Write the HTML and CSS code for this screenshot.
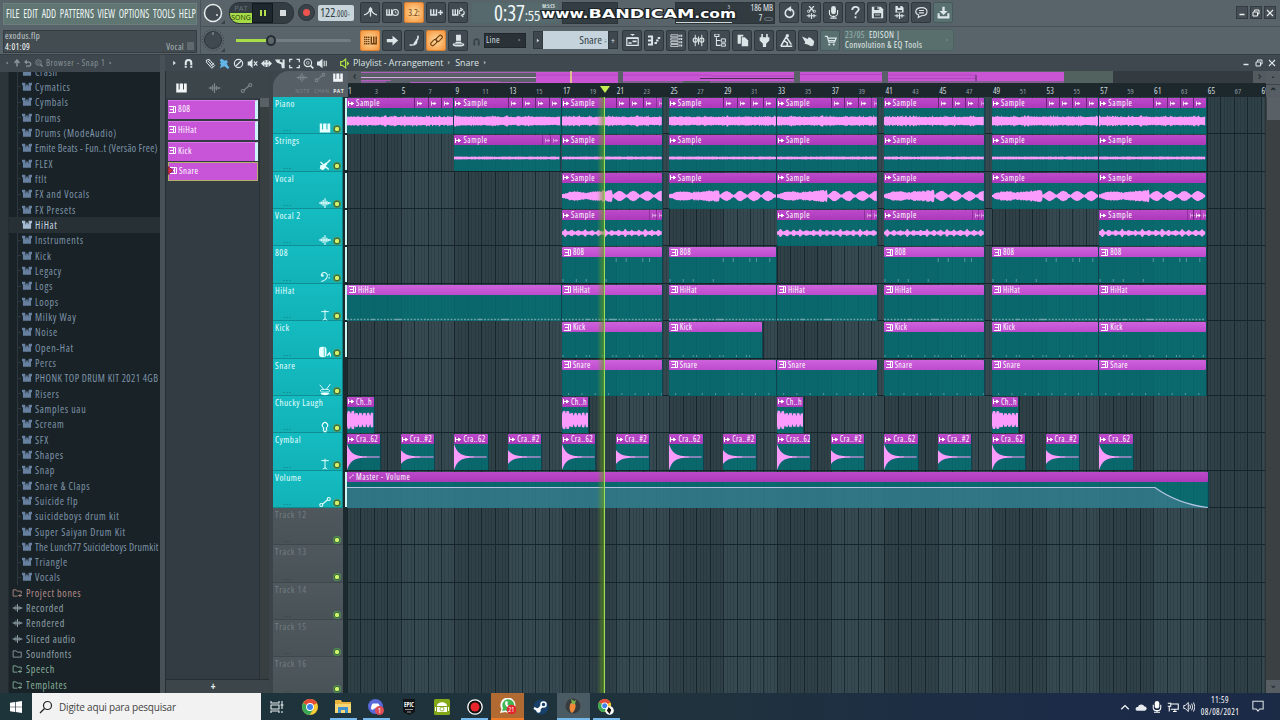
FILE: index.html
```html
<!DOCTYPE html>
<html lang="pt-BR">
<head>
    <meta charset="UTF-8">
    <title>exodus.flp</title>
    <link rel="stylesheet" href="styles.css">
</head>
<body>
    <svg class="defs" width="0" height="0">
        <symbol id="piano" viewBox="0 0 16 16"><path d="M1 2h3.200v8h1.300V2h4.500v8h1.300V2H15v12H1z" fill="currentColor"/></symbol>
        <symbol id="wave" viewBox="0 0 16 16"><path d="M0 8h16M3 6v4M5.500 4v8M8 1.500v13M10.500 5v6M13 6.500v3" stroke="currentColor" stroke-width="1.500" fill="none"/></symbol>
        <symbol id="auto" viewBox="0 0 16 16"><path d="M4.500 11L11.500 5" stroke="currentColor" stroke-width="1.500"/><circle cx="3" cy="12" r="2" fill="none" stroke="currentColor" stroke-width="1.500"/><circle cx="13" cy="4" r="2" fill="none" stroke="currentColor" stroke-width="1.500"/></symbol>
        <symbol id="magnet" viewBox="0 0 16 16"><path d="M4 14V7a4 4 0 0 1 8 0v7" fill="none" stroke="currentColor" stroke-width="3"/><path d="M2 11h4M10 11h4" stroke="#333c42"/></symbol>
        <symbol id="right" viewBox="0 0 16 16"><path d="M5 3l6 5-6 5z" fill="currentColor"/></symbol>
        <symbol id="up" viewBox="0 0 16 16"><path d="M8 15V3M3 8l5-6 5 6" fill="none" stroke="currentColor" stroke-width="3"/></symbol>
        <symbol id="back" viewBox="0 0 16 16"><path d="M4 14h5c6 0 6-8 0-8H4" fill="none" stroke="currentColor" stroke-width="2.500"/><path d="M0 6l6-5v10z" fill="currentColor"/></symbol>
        <symbol id="pencil" viewBox="0 0 16 16"><path d="M2 3l4-1 8 9-4 4-8-9zM4 6l3-3M7 9l3-3M8 12l5-5M5 5l7 8" fill="none" stroke="currentColor" stroke-width="1.400"/></symbol>
        <symbol id="brush" viewBox="0 0 16 16"><path d="M1 3l3-2 4 3 3-1 2 3-2 2 4 6-2 2-5-4-3 1-4 2 2-5-2-2 2-1z" fill="currentColor"/></symbol>
        <symbol id="ban" viewBox="0 0 16 16"><circle cx="8" cy="8" r="6" fill="none" stroke="currentColor" stroke-width="1.700"/><path d="M12 4l-8 8" stroke="currentColor" stroke-width="1.700"/></symbol>
        <symbol id="mute" viewBox="0 0 16 16"><path d="M1 5h3l4-4v14l-4-4H1z" fill="currentColor"/><path d="M10 5l5 6M15 5l-5 6" stroke="currentColor" stroke-width="1.700"/></symbol>
        <symbol id="slip" viewBox="0 0 16 16"><path d="M0 8l5-5v3.500h1.500V3h3v3.500H11V3l5 5-5 5V9.500H9.500V13h-3V9.500H5V13z" fill="currentColor"/></symbol>
        <symbol id="slice" viewBox="0 0 16 16"><path d="M0 2h14v13h-4L9 9 3 7z" fill="currentColor"/><path d="M7 2v3l4 2V2" fill="#3f484e"/></symbol>
        <symbol id="select" viewBox="0 0 16 16"><path d="M1 6V2h4M11 2h4v4M15 10v4h-4M5 14H1v-4" fill="none" stroke="currentColor" stroke-width="1.800"/></symbol>
        <symbol id="lens" viewBox="0 0 16 16"><circle cx="7" cy="7" r="5.500" fill="none" stroke="currentColor" stroke-width="1.600"/><circle cx="7" cy="7" r="2" fill="none" stroke="currentColor"/><path d="M11 11l4 4" stroke="currentColor" stroke-width="2.400"/></symbol>
        <symbol id="speaker" viewBox="0 0 16 16"><path d="M0 5h3l5-4v14l-5-4H0z" fill="currentColor"/><path d="M10.500 4v8M13.500 4v8" stroke="currentColor" stroke-width="1.500"/></symbol>
        <symbol id="play" viewBox="0 0 16 16"><path d="M1 5h3l5-4v14l-5-4H1z" fill="none" stroke="currentColor" stroke-width="2"/><path d="M11 4l4 4-4 4z" fill="currentColor"/></symbol>
        <symbol id="box" viewBox="0 0 16 16"><path d="M0 1h5l1 3h4l1-3h5v4h-1.500v9h-13V5H0z" fill="currentColor"/><path d="M6 3v4M10 3v4" stroke="#192227"/></symbol>
        <symbol id="folder" viewBox="0 0 16 16"><path d="M1 13V3h5l1.500 2H14v8z" fill="none" stroke="currentColor" stroke-width="1.400"/></symbol>
        <symbol id="folderplus" viewBox="0 0 16 16"><path d="M8 13H1V3h5l1.500 2H14v4M9 12h6M12 9.500v5" fill="none" stroke="currentColor" stroke-width="1.400"/></symbol>
        <symbol id="metro" viewBox="0 0 16 16"><path d="M0 11q5-1 7-6M16 11q-5-1-7-6M8 13V4" fill="none" stroke="currentColor" stroke-width="1.600"/><path d="M8 1l2.500 3L8 8 5.500 4z" fill="currentColor"/></symbol>
        <symbol id="wait" viewBox="0 0 16 16"><path d="M1 4v7h7M4 4v6M7 4v6" fill="none" stroke="currentColor" stroke-width="1.700"/><circle cx="11.500" cy="8" r="3.700" fill="none" stroke="currentColor" stroke-width="1.300"/><path d="M11.500 6v2.500H13" stroke="currentColor" fill="none"/></symbol>
        <symbol id="keysplus" viewBox="0 0 16 16"><path d="M1 4v7h7V4M4.500 4v6M10 8h6M13 5v6" fill="none" stroke="currentColor" stroke-width="1.800"/></symbol>
        <symbol id="keysloop" viewBox="0 0 16 16"><path d="M1 4v7h6V4M4 4v6" fill="none" stroke="currentColor" stroke-width="1.700"/><path d="M10 10a3.300 3.300 0 0 1 1-5.500M14 6a3.300 3.300 0 0 1-1 5.500M10 2.500l3 2-2.500 2M14.500 9.500l-3 2 2.500 2" fill="none" stroke="currentColor" stroke-width="1.300"/></symbol>
        <symbol id="typing" viewBox="0 0 16 16"><path d="M0 4h7.500M0 6.700h7.500M0 9.400h7.500M0 12h7.500" stroke="currentColor" stroke-width="1.700" stroke-dasharray="1.800 .6"/><path d="M9 3v9h6V3M12 3v9" fill="none" stroke="currentColor" stroke-width="1.800"/></symbol>
        <symbol id="arrow" viewBox="0 0 16 16"><path d="M1 6h7V2l7 6-7 6v-4H1z" fill="currentColor"/></symbol>
        <symbol id="step" viewBox="0 0 16 16"><path d="M2 13.500h4M10 8l2-2 .5-4" fill="none" stroke="currentColor" stroke-width="2"/><path d="M6 14l1-3 3-4 2 1-1 4-3 2z" fill="currentColor"/></symbol>
        <symbol id="link" viewBox="0 0 16 16"><rect x="0" y="8" width="9" height="4.500" rx="2.200" transform="rotate(-45 5 10)" fill="none" stroke="currentColor" stroke-width="1.400"/><rect x="7" y="3.500" width="9" height="4.500" rx="2.200" transform="rotate(-45 11 6)" fill="none" stroke="currentColor" stroke-width="1.400"/></symbol>
        <symbol id="hat" viewBox="0 0 16 16"><path d="M5 1h6v8l1 2 3 1v2q-7 3-14 0v-2l3-1 1-2z" fill="currentColor"/><path d="M4 9h8M3 12.500h10" stroke="#3e474d"/></symbol>
        <symbol id="undo" viewBox="0 0 16 16"><path d="M10 4a5.200 5.200 0 1 1-5 .5" fill="none" stroke="currentColor" stroke-width="2"/><path d="M4 4l6-4v7z" fill="currentColor"/></symbol>
        <symbol id="cut" viewBox="0 0 16 16"><path d="M5 0l6 7M11 0L5 7M2 12h12M5 10v4M8 9v7M11 10v4" stroke="currentColor" stroke-width="1.500"/><circle cx="11.500" cy="6.500" r="1.500" fill="none" stroke="currentColor"/><circle cx="4.500" cy="6.500" r="1.500" fill="none" stroke="currentColor"/></symbol>
        <symbol id="mic" viewBox="0 0 16 16"><rect x="5" y="0" width="6" height="10" rx="3" fill="currentColor"/><path d="M3 5v4a5 4 0 0 0 10 0V5M8 12v3M4 15h8" fill="none" stroke="currentColor" stroke-width="1.400"/></symbol>
        <symbol id="help" viewBox="0 0 16 16"><path d="M4 5c0-5 8-5 8-1 0 3-4 3-4 6.500M8 12.500V15" fill="none" stroke="currentColor" stroke-width="2.200"/></symbol>
        <symbol id="save" viewBox="0 0 16 16"><path d="M1 1h11l3 3v11H1z" fill="currentColor"/><path d="M4 1h6v4H4zM3.500 9h9v5h-9z" fill="#3e474d"/><path d="M5 11h6" stroke="currentColor"/><path d="M8 1h1.500v3H8z" fill="currentColor"/></symbol>
        <symbol id="savewave" viewBox="0 0 16 16"><path d="M3 0h8l2 2v6H3z" fill="currentColor"/><path d="M5 5h6v2H5zM6 0h3v2H6z" fill="#3e474d"/><path d="M2 12h12M5 10v4M8 9v7M11 10v4" stroke="currentColor" stroke-width="1.500"/></symbol>
        <symbol id="chat" viewBox="0 0 16 16"><path d="M8 2c9 0 9 10 0 10l-4 2 .5-3C-1 9 0 2 8 2zM5 5.500h6M5 8.500h6" fill="none" stroke="currentColor" stroke-width="1.400"/></symbol>
        <symbol id="down" viewBox="0 0 16 16"><path d="M6.500 1h3v5H13L8 11 3 6h3.500z" fill="currentColor"/><path d="M2 9v5h12V9" fill="none" stroke="currentColor" stroke-width="2.600"/></symbol>
        <symbol id="plwin" viewBox="0 0 16 16"><path d="M5 0h6L8 2.500z" fill="currentColor"/><path d="M1 5h14v9H1z" fill="none" stroke="currentColor" stroke-width="1.500"/><path d="M1 5h14M3 11h4M8 9h5" stroke="currentColor" stroke-width="2"/></symbol>
        <symbol id="roll" viewBox="0 0 16 16"><path d="M0 3h5v10H0M0 8h5M8 11h3M10 8h3M12 5h3" fill="none" stroke="currentColor" stroke-width="2.400"/></symbol>
        <symbol id="rack" viewBox="0 0 16 16"><path d="M1 1h9v2.500H1zM1 5h9v2.500H1zM1 9h9v2.500H1zM1 13h9v2.500H1z" fill="none" stroke="currentColor"/><path d="M11.500 2.200h3.500M11.500 6.200h3.500M11.500 10.200h3.500M11.500 14.200h3.500" stroke="currentColor" stroke-width="2.500" stroke-dasharray="1.500 .6"/></symbol>
        <symbol id="mixer" viewBox="0 0 16 16"><path d="M4 1v14M12 1v14M8 3v10" stroke="currentColor" stroke-width="1.200"/><rect x="1.500" y="5" width="5" height="5" rx="2" fill="none" stroke="currentColor" stroke-width="1.500"/><rect x="9.500" y="5" width="5" height="5" rx="2" fill="none" stroke="currentColor" stroke-width="1.500"/></symbol>
        <symbol id="tree" viewBox="0 0 16 16"><path d="M1 0h5v3H1zM3 4v10h5M3 8h5" fill="none" stroke="currentColor" stroke-width="1.300"/><path d="M9 6h5v4H9zM9 12h5v3H9z" fill="none" stroke="currentColor" stroke-width="1.200"/></symbol>
        <symbol id="pages" viewBox="0 0 16 16"><path d="M2 1h7v2H6v9H2z" fill="currentColor"/><path d="M7 4h4l4 4v7H7z" fill="currentColor"/></symbol>
        <symbol id="plug" viewBox="0 0 16 16"><path d="M4 0h2v4h4V0h2v4h2v4l-4 4v4H6v-4L2 8V4h2z" fill="currentColor"/></symbol>
        <symbol id="scope" viewBox="0 0 16 16"><path d="M8 3L5 8l4 3v4M5 8l-4 7M8 4l6 9M1 15h14" fill="none" stroke="currentColor" stroke-width="1.900"/><circle cx="9" cy="2" r="2" fill="currentColor"/></symbol>
        <symbol id="hand" viewBox="0 0 16 16"><path d="M0 3l7 3 1-2 3 1 4 4-1 5-3 1-4-2-4-1 1-2z" fill="currentColor"/></symbol>
        <symbol id="cart" viewBox="0 0 16 16"><path d="M1 3h3l2 7h7l2-5H5M6 8h8" fill="none" stroke="currentColor" stroke-width="1.500"/><circle cx="6.500" cy="13" r="1.300" fill="currentColor"/><circle cx="12" cy="13" r="1.300" fill="currentColor"/></symbol>
        <symbol id="min" viewBox="0 0 16 16"><path d="M3 11h10" stroke="currentColor" stroke-width="3"/></symbol>
        <symbol id="restore" viewBox="0 0 16 16"><path d="M5 5V2h9v8h-3M2 6h9v8H2z" fill="none" stroke="currentColor" stroke-width="2"/></symbol>
        <symbol id="close" viewBox="0 0 16 16"><path d="M2 2l12 12M14 2L2 14" stroke="currentColor" stroke-width="2.400"/></symbol>
        <symbol id="guitar" viewBox="0 0 16 16"><path d="M15 1L9 7M2 4l11 10" stroke="currentColor" stroke-width="1.700"/><path d="M10 5l1 2-2 2v3l-4 3-4-2 1-5 4 0 2-3z" fill="currentColor"/></symbol>
        <symbol id="bass" viewBox="0 0 16 16"><path d="M3 6c0-6 9-5 8 1-.5 4-4 6-8 7M13.500 4v2M13.500 8v2" fill="none" stroke="currentColor" stroke-width="1.400"/><circle cx="4.500" cy="6" r="1.700" fill="currentColor"/></symbol>
        <symbol id="stand" viewBox="0 0 16 16"><path d="M3 3.500h10M8 1v13M5 15l3-2 3 2" fill="none" stroke="currentColor" stroke-width="1.300"/></symbol>
        <symbol id="kick" viewBox="0 0 16 16"><rect x="0" y="1" width="10" height="14" rx="4" fill="currentColor"/><path d="M7 2v12" stroke="#12b6bb"/><path d="M11 13l3-4 2 5" fill="none" stroke="currentColor" stroke-width="1.700"/></symbol>
        <symbol id="drum" viewBox="0 0 16 16"><path d="M1 1l5 6M15 0L10 7" stroke="currentColor" stroke-width="1.200"/><ellipse cx="8" cy="9" rx="6.500" ry="2" fill="none" stroke="currentColor" stroke-width="1.200"/><path d="M2 12h12c-1 4-11 4-12 0z" fill="currentColor"/></symbol>
        <symbol id="vox" viewBox="0 0 16 16"><path d="M6 13V8M10 13V8M5 8a3.500 4 0 1 1 6 0" fill="none" stroke="currentColor" stroke-width="1.700"/><path d="M6 14h4" stroke="currentColor" stroke-width="2"/></symbol>
        <symbol id="chrome" viewBox="0 0 16 16"><circle cx="8" cy="8" r="8" fill="#f8c932"/><path d="M8 8L1.100 4A8 8 0 0 1 15 4z" fill="#e34b3b"/><path d="M8 8L1.100 4a8 8 0 0 0 6.400 12l4-6z" fill="#3aa757"/><circle cx="8" cy="8" r="3.900" fill="#fff"/><circle cx="8" cy="8" r="3" fill="#4284ee"/></symbol>
    </svg>

    <header class="toolbar">
        <div class="menu-col">
            <nav class="menu"><div><span>FILE</span><span>EDIT</span><span>ADD</span><span>PATTERNS</span><span>VIEW</span><span>OPTIONS</span><span>TOOLS</span><span>HELP</span></div></nav>
            <div class="hint"><p>exodus.flp</p><p class="pos">4:01:09</p><span class="target">Vocal <i></i></span></div>
        </div>
        <div class="rows">
            <div class="trow">
                <svg class="knob" viewBox="0 0 24 24"><circle cx="12" cy="12" r="8.500" fill="#414a50" stroke="#e8eeee" stroke-width="1.500"/><circle cx="16" cy="14" r="1" fill="#ddd"/><path d="M24 19v4h-4z" fill="#384146"/></svg>
                <div class="transport">
                    <div class="mode"><span>PAT</span><b>SONG</b></div>
                    <div class="pause"><i></i><i></i></div>
                    <div class="stop"><i></i></div>
                </div>
                <div class="rec"><i></i></div>
                <div class="tempo">122<small>.000</small><em>÷</em></div>
                <div class="btns">
                    <button><svg><use href="#metro"/></svg></button>
                    <button><svg><use href="#wait"/></svg></button>
                    <button class="on">3.2:</button>
                    <button><svg><use href="#keysplus"/></svg></button>
                    <button><svg><use href="#keysloop"/></svg></button>
                </div>
                <div class="time">0:37<span>:55</span><sup>M:S:CS</sup></div>
                <div class="wavebox"></div>
                <div class="cpu"><div class="graph">3</div><div class="mem">186 MB<br>7 <i></i></div></div>
                <div class="btns">
                    <button><svg><use href="#undo"/></svg></button>
                    <button><svg><use href="#cut"/></svg></button>
                    <button><svg><use href="#mic"/></svg></button>
                    <button><svg><use href="#help"/></svg></button>
                    <button><svg><use href="#save"/></svg></button>
                    <button><svg><use href="#savewave"/></svg></button>
                    <button><svg><use href="#chat"/></svg></button>
                    <button class="soft"><svg><use href="#down"/></svg></button>
                </div>
                <div class="winbtns">
                    <button><svg><use href="#min"/></svg></button>
                    <button><svg><use href="#restore"/></svg></button>
                    <button><svg><use href="#close"/></svg></button>
                </div>
            </div>
            <div class="trow">
                <svg class="knob" viewBox="0 0 24 24"><circle cx="12" cy="12" r="10.500" fill="none" stroke="#3e474c" stroke-width="1.200" stroke-dasharray="1 2"/><circle cx="12" cy="12" r="8.500" fill="#3f494f" stroke="#2c353a"/><path d="M12 4v3" stroke="#9aa5a8"/><path d="M24 20v4h-4z" fill="#384146"/></svg>
                <div class="slider"><i></i><b></b></div>
                <div class="btns">
                    <button class="on"><svg><use href="#typing"/></svg></button>
                    <button><svg><use href="#arrow"/></svg></button>
                    <button><svg><use href="#step"/></svg></button>
                    <button class="on"><svg><use href="#link"/></svg></button>
                    <button><svg><use href="#hat"/></svg></button>
                </div>
                <svg class="snapicon"><use href="#magnet"/></svg>
                <div class="snap">Line <svg><use href="#right"/></svg></div>
                <div class="pattern"><span><svg><use href="#right"/></svg></span><div>Snare<em>÷</em></div><span>+</span></div>
                <div class="btns">
                    <button><svg><use href="#plwin"/></svg></button>
                    <button><svg><use href="#roll"/></svg></button>
                    <button><svg><use href="#rack"/></svg></button>
                    <button><svg><use href="#mixer"/></svg></button>
                    <button><svg><use href="#tree"/></svg></button>
                    <button><svg><use href="#pages"/></svg></button>
                    <button><svg><use href="#plug"/></svg></button>
                    <button><svg><use href="#scope"/></svg></button>
                    <button><svg><use href="#hand"/></svg></button>
                    <button class="soft"><svg><use href="#cart"/></svg></button>
                </div>
                <div class="news"><p><span>23/05</span>&nbsp; EDISON |</p><p>Convolution &amp; EQ Tools</p><svg><use href="#right"/></svg></div>
            </div>
        </div>
        <svg class="watermark" viewBox="0 0 200 20"><text x="1" y="15" textLength="195" lengthAdjust="spacingAndGlyphs"><tspan>www.</tspan><tspan class="big">BANDICAM</tspan><tspan>.com</tspan></text></svg>
    </header>

    <main>
        <aside class="browser">
            <div class="browser-head"><svg><use href="#right"/></svg><svg class="nav"><use href="#up"/></svg><svg class="nav"><use href="#back"/></svg><svg class="nav"><use href="#lens"/></svg>Browser - Snap 1 <svg><use href="#right"/></svg></div>
            <div class="browser-body">
                <div class="gutter"></div>
                <ul id="files"></ul>
            </div>
        </aside>

        <section class="playlist">
            <div class="pl-head">
                <svg class="sm"><use href="#right"/></svg>
                <svg class="mg"><use href="#magnet"/></svg>
                <svg><use href="#pencil"/></svg>
                <svg class="blue"><use href="#brush"/></svg>
                <svg><use href="#ban"/></svg>
                <svg><use href="#mute"/></svg>
                <svg><use href="#slip"/></svg>
                <svg><use href="#slice"/></svg>
                <svg><use href="#select"/></svg>
                <svg><use href="#lens"/></svg>
                <svg><use href="#speaker"/></svg>
                <svg class="green"><use href="#play"/></svg>
                <div class="crumbs">Playlist - Arrangement <svg><use href="#right"/></svg> Snare <svg><use href="#right"/></svg></div>
                <div class="pl-win"><svg><use href="#min"/></svg><svg><use href="#restore"/></svg><svg><use href="#close"/></svg></div>
            </div>
            <div class="pl-body">
                <div class="picker">
                    <div class="tabs"><svg class="act"><use href="#piano"/></svg><svg><use href="#wave"/></svg><svg><use href="#auto"/></svg></div>
                    <div class="picker-main">
                        <div class="patterns">
                            <div class="pat"><svg class="pi" viewBox="0 0 7 7"><path d="M0 .5h6.500v6H0M1 3.500h3M4.500 1v5" stroke="#fff" fill="none"/></svg>808</div>
                            <div class="pat"><svg class="pi" viewBox="0 0 7 7"><path d="M0 .5h6.500v6H0M1 3.500h3M4.500 1v5" stroke="#fff" fill="none"/></svg>HiHat</div>
                            <div class="pat"><svg class="pi" viewBox="0 0 7 7"><path d="M0 .5h6.500v6H0M1 3.500h3M4.500 1v5" stroke="#fff" fill="none"/></svg>Kick</div>
                            <div class="pat sel"><svg class="pi" viewBox="0 0 7 7"><path d="M0 .5h6.500v6H0M1 3.500h3M4.500 1v5" stroke="#fff" fill="none"/><path d="M-2-.5l5 4-5 4z" fill="#d5304a" stroke="#5c1428" stroke-width=".7"/></svg>Snare</div>
                        </div>
                        <div class="pscroll"><b></b></div>
                    </div>
                    <div class="add">+</div>
                </div>
                <div class="arrange">
                    <div class="arr-top">
                        <div class="corner">
                            <div class="ci"><svg><use href="#wave"/></svg><svg><use href="#auto"/></svg><svg class="act"><use href="#piano"/></svg></div>
                            <div class="cl"><span>NOTE</span><span>CHAN</span><b>PAT</b></div>
                        </div>
                        <div class="top-right">
                            <div class="mini">
                                <span class="mbtn">‹</span>
                                <svg class="map" viewBox="361 71 892 12" preserveAspectRatio="none">
                                    <rect x="361" y="71" width="752" height="12" fill="#52625f"/>
                                    <rect x="361" y="71" width="703" height="12" fill="#596068"/>
                                    <path d="M361 72.500h175M361 82h25M450 82h50M361 80.500h30M410 82.500h126" stroke="#b25cc0"/>
                                    <path d="M361 77.500h175" stroke="#d9a9df"/>
                                    <path d="M536 72h82v11h-82zM623 72h171v9H623zM800 72h82v9h-82zM888 72h176v9H888z" fill="#ca55d4"/>
                                    <path d="M623 82h60M710 82h84M800 82h82M888 82h176" stroke="#b25cc0"/>
                                    <path d="M536 75h82M623 75h88M711 76h83M800 74.500h82M888 75h88M711 78.500h83M888 78.500h88" stroke="#a444b0" stroke-width=".7"/>
                                    <path d="M700 78.500h94M976 75v6" stroke="#4c3155"/>
                                    <path d="M571 71v12" stroke="#e9e37c" stroke-width="1.500"/>
                                </svg>
                                <span class="mbtn">›</span>
                            </div>
                            <div class="ruler" id="ruler"></div>
                        </div>
                        <div class="top-btns"><b>·</b><b>⌃</b></div>
                    </div>
                    <div class="arr-main">
                        <div class="heads" id="heads"></div>
                        <div class="lanes" id="lanes"></div>
                        <div class="vscroll"><b></b><span>⌄</span></div>
                    </div>
                </div>
            </div>
        </section>
    </main>

    <footer class="taskbar">
        <div class="start"><svg viewBox="0 0 12 12"><path d="M0 1.700l5-.7v4.700H0zM5.700.9L12 0v5.700H5.700zM0 6.300h5V11l-5-.7zM5.700 6.300H12V12l-6.300-.9z" fill="#fff"/></svg></div>
        <div class="search"><svg viewBox="0 0 14 14"><circle cx="8.500" cy="5.500" r="4" fill="none" stroke="#222" stroke-width="1.200"/><path d="M5.500 8.500L1 13" stroke="#222" stroke-width="1.200"/></svg>Digite aqui para pesquisar</div>
        <div class="apps">
            <div class="app"><svg viewBox="0 0 16 16"><path d="M2 2v2h8V2M2 14v-2h8v2M2 6h8v4H2zM13 2v8M13 12v2M11.500 6h3" fill="none" stroke="#e8eef0" stroke-width="1.100"/></svg></div>
            <div class="app"><svg><use href="#chrome"/></svg></div>
            <div class="app run"><svg viewBox="0 0 16 16"><path d="M0 1h6l1 2h9v11H0z" fill="#e9b53e"/><path d="M0 5h16v9H0z" fill="#f8d675"/><path d="M3 14V8h10v6h-3v-3H6v3z" fill="#3f92cf"/></svg></div>
            <div class="app run"><svg viewBox="0 0 16 16"><circle cx="7.500" cy="7.500" r="7.500" fill="#5968d8"/><path d="M3 10c0-3 1-5.500 2-5.500h5c1 0 2 2.500 2 5.500l-2 1-1-1.500H6L5 11z" fill="#fff"/><circle cx="11.500" cy="11.500" r="4.500" fill="#dc4e55"/><text x="10" y="14" font-size="7" fill="#fff">1</text></svg></div>
            <div class="app"><svg viewBox="0 0 16 16"><path d="M2 0h12v13l-6 3-6-3z" fill="#101417"/><text x="3" y="8" font-size="7" font-weight="bold" fill="#fff" textLength="10" lengthAdjust="spacingAndGlyphs">EPIC</text><path d="M4 10.500h8M6 13h4" stroke="#999"/></svg></div>
            <div class="app"><svg viewBox="0 0 16 16"><rect width="16" height="16" rx="1.500" fill="#82a818"/><path d="M3 7c0-5 10-5 10 0zM3 8h10v5H3zM1 8h1v4H1zM14 8h1v4h-1z" fill="#fff"/><circle cx="8" cy="10" r="2" fill="#fff" stroke="#82a818" stroke-width=".8"/></svg></div>
            <div class="app run"><svg viewBox="0 0 16 16"><circle cx="8" cy="8" r="7.200" fill="#111" stroke="#fff" stroke-width="1.300"/><circle cx="8" cy="8" r="4.500" fill="#e8252a"/></svg></div>
            <div class="app wa"><svg viewBox="0 0 16 16"><path d="M0 15l1.500-4A7.500 7.500 0 1 1 5 14z" fill="#fff"/><path d="M2 13l1-3a6 6 0 1 1 2.500 2.500z" fill="#42b854"/><path d="M5 4c0 4 2 6 6 6l1-2-2-1-1 1-2-2 1-1-1-2z" fill="#fff"/><circle cx="11.500" cy="11.500" r="4.800" fill="#e3262c"/><text x="8.200" y="14.200" font-size="7" fill="#fff">21</text></svg></div>
            <div class="app"><svg viewBox="0 0 16 16"><circle cx="8" cy="8" r="7.500" fill="#17406b"/><circle cx="10.500" cy="5.500" r="2.500" fill="#17406b" stroke="#fff" stroke-width="1.500"/><path d="M1 9l4 2 4-4" stroke="#fff" stroke-width="2.500" fill="none"/><circle cx="5.500" cy="11.500" r="2.200" fill="#fff"/></svg></div>
            <div class="app fl"><svg viewBox="0 0 16 16"><circle cx="8" cy="8" r="7.500" fill="#383b3d"/><path d="M5 7c0-3 5-3 5.500 0 .5 3-1.500 7-3.500 8-2-1-3-5-2-8z" fill="#f0893a"/><path d="M7 6L6 1l3 2 2-1-1 4z" fill="#7bb24a"/></svg></div>
            <div class="app run"><svg viewBox="0 0 18 18"><use href="#chrome" width="15" height="15"/><circle cx="13" cy="13" r="4.800" fill="#fff"/><path d="M12 9l3 3-2 5-3-4z" fill="#111"/></svg></div>
        </div>
        <div class="tray">
            <svg viewBox="0 0 16 16"><path d="M3 11l5-5 5 5" fill="none" stroke="#fff" stroke-width="1.500"/></svg>
            <svg viewBox="0 0 16 16"><path d="M3 13c-4-1-2-6 1-5 1-5 8-4 8-1 4 0 5 5 1 6z" fill="#e7ebef"/></svg>
            <svg viewBox="0 0 16 16"><use href="#mic"/></svg>
            <svg viewBox="0 0 16 16"><path d="M5 4h10v7H5M8 14h5M10.500 11v3M1 3h4v4H1M3 7v7" fill="none" stroke="#fff" stroke-width="1.400"/></svg>
            <svg viewBox="0 0 16 16"><path d="M1 6h2l4-4v12l-4-4H1zM9 5q2 3 0 6M11.500 3.500q3 4.500 0 9M14 2q4 6 0 12" fill="none" stroke="#fff" stroke-width="1.200"/></svg>
        </div>
        <div class="clock">11:59<br>08/08/2021</div>
        <svg class="notif" viewBox="0 0 14 14"><path d="M1 1.500h12v9H9L7 13l-2-2.500H1z" fill="none" stroke="#dfe5ea" stroke-width="1.200"/></svg>
    </footer>
    <script src="script.js"></script>
</body>
</html>
```
FILE: styles.css
```css
* { box-sizing: border-box; }
body {
    margin: 0;
    width: 1280px;
    height: 720px;
    overflow: hidden;
    display: flex;
    flex-direction: column;
    background: #333c42;
    color: #d5dfe2;
    font-family: "Open Sans", "Noto Sans", sans-serif;
    font-stretch: 75%;
    font-size: 10px;
}
p, ul { margin: 0; padding: 0; list-style: none; }
svg { display: block; flex: none; }
.defs { position: absolute; }
button { padding: 0; border: 0; color: inherit; font: inherit; }

/* toolbar */
.toolbar {
    position: relative;
    flex: none;
    display: flex;
    height: 55px;
    background: #59636a;
    border-bottom: 1px solid #343d42;
}
.menu-col { width: 201px; padding: 3px; border-right: 1px solid #485157; }
.menu {
    height: 22px;
    padding: 0 2px;
    background: #5f7673;
    border: 1px solid #6b7f7d;
    color: #edf3f2;
    font-size: 12px;
    line-height: 19px;
    white-space: nowrap;
}
.menu div { display: flex; justify-content: space-between; width: 231px; transform: scaleX(.822); transform-origin: 0 0; }
.hint {
    position: relative;
    height: 23px;
    margin-top: 5px;
    padding: 0 1px;
    background: #434c51;
    border: 1px solid #343c41;
    font-size: 8.8px;
    line-height: 10.500px;
    letter-spacing: .35px;
    color: #c3cdd0;
}
.hint .pos { color: #fff; }
.hint .target { position: absolute; right: 2px; bottom: 0; color: #aeb8bb; }
.hint i { display: inline-block; width: 7px; height: 8px; margin-left: 1px; background: #60696d; border-radius: 1px; }
.rows { flex: 1; display: flex; flex-direction: column; }
.trow { display: flex; align-items: center; height: 27px; border-bottom: 1px solid #485157; }
.trow + .trow { border: 0; height: 28px; }
.knob { width: 24px; height: 24px; margin-right: 4px; }
.transport { display: flex; width: 65px; height: 22px; background: #343d42; border-radius: 10px; overflow: hidden; border: 1px solid #2b3439; }
.mode { width: 22px; font-size: 7.5px; line-height: 10px; text-align: center; color: #68747a; font-stretch: 100%; }
.mode b { display: block; background: #a5dc46; color: #25320e; font-weight: 400; font-size: 7px; }
.pause { display: flex; gap: 2px; width: 21px; justify-content: center; align-items: center; background: #1e272c; border: 1px solid #12191c; }
.pause i { width: 2px; height: 6px; background: #b4e04c; }
.stop { flex: 1; display: flex; align-items: center; padding-left: 7px; }
.stop i { width: 6px; height: 6px; background: #d7dddf; }
.rec { display: flex; align-items: center; justify-content: center; width: 17px; height: 17px; margin: 0 3px 0 4px; border-radius: 50%; background: #3b4348; border: 1px solid #2b3338; }
.rec i { width: 7px; height: 7px; border-radius: 50%; background: #ef5450; }
.tempo { width: 36px; height: 16px; margin-right: 6px; padding-left: 2px; background: #c8d6dc; border-radius: 2px; color: #323e45; font-size: 12px; line-height: 16px; white-space: nowrap; }
.tempo small { font-size: 8px; }
em { font-style: normal; font-size: 7px; color: #6d7c84; }
.btns { display: flex; gap: 2px; }
.btns button {
    display: flex;
    align-items: center;
    justify-content: center;
    width: 20px;
    height: 21px;
    background: #414a50;
    border: 1px solid #2e373c;
    border-radius: 2px;
    color: #dce5e7;
}
.btns svg { width: 13px; height: 13px; }
.btns .on { background: radial-gradient(#ffdca0, #f5933a); border-color: #d98232; color: #6f3f12; font-size: 9px; }
.btns .soft { background: #587170; border-color: #465a5a; }
.time { position: relative; width: 88px; height: 22px; margin-left: 3px; padding-left: 22px; background: #566a6d; border: 1px solid #536668; color: #f0f6f6; font-size: 21px; line-height: 20px; letter-spacing: -.2px; white-space: nowrap; }
.time span { font-size: 15px; }
.time sup { position: absolute; right: 3px; top: 0; font-size: 5px; line-height: 6px; letter-spacing: 0; font-weight: 600; }
.wavebox { width: 56px; height: 22px; margin-left: 3px; background: #343d42; border: 1px solid #2c353a; }
.cpu { display: flex; width: 100px; height: 22px; margin: 0 4px 0 57px; background: #323b40; border: 1px solid #2b3439; }
.graph { width: 56px; padding-right: 2px; text-align: right; font-size: 6px; border-bottom: 1px solid #cdd6d9; }
.mem { flex: 1; text-align: right; font-size: 8.5px; line-height: 10px; padding-right: 1px; color: #e2e8ea; white-space: nowrap; }
.mem i { display: inline-block; width: 9px; height: 4px; border: 1px solid #68747a; border-radius: 50%; }
.winbtns { display: flex; gap: 2px; margin: 0 4px 0 auto; }
.winbtns button { display: flex; align-items: center; justify-content: center; width: 12px; height: 13px; background: #454e54; border: 1px solid #333b40; color: #eef2f3; }
.winbtns svg { width: 8px; height: 8px; }
.slider { position: relative; width: 115px; height: 3px; margin: 0 9px 0 7px; background: #727c82; border-radius: 2px; }
.slider i { display: block; width: 34px; height: 3px; background: #a8dc48; }
.slider b { position: absolute; left: 30px; top: -4px; width: 10px; height: 11px; border-radius: 50%; background: #5d676c; border: 2px solid #252d31; }
.snapicon { width: 9px; height: 10px; margin: 3px 3px 0 4px; color: #384147; }
.snap { display: flex; justify-content: space-between; align-items: center; width: 42px; height: 15px; padding: 0 3px 0 1px; background: #2a3237; border: 1px solid #21282c; font-size: 8.8px; letter-spacing: .3px; }
.snap svg, .news svg { width: 5px; height: 6px; color: #7b868a; }
.pattern { display: flex; width: 85px; height: 18px; margin: 0 4px 0 7px; }
.pattern > span { display: flex; align-items: center; justify-content: center; width: 10px; background: #3e474d; border: 1px solid #30393e; font-size: 9px; }
.pattern span svg { width: 6px; height: 7px; }
.pattern div { flex: 1; background: #c5d4dc; color: #35424a; text-align: right; padding-right: 1px; font-size: 11.5px; line-height: 17px; white-space: nowrap; }
.pattern em { margin-left: 2px; }
.news { position: relative; width: 111px; height: 22px; margin-left: 3px; padding: 1px 1px; background: #586f6e; border: 1px solid #4d6261; font-size: 8.8px; line-height: 9.5px; color: #e4ecec; letter-spacing: .35px; white-space: nowrap; }
.news p span { color: #9db3b2; }
.news svg { position: absolute; right: 3px; top: 7px; }
.watermark { position: absolute; left: 540px; top: 3px; width: 200px; height: 20px; z-index: 5; }
.watermark text { font-family: "DejaVu Sans", sans-serif; font-weight: bold; font-size: 11.5px; fill: #fff; stroke: #1c2326; stroke-width: 2px; paint-order: stroke; }
.watermark .big { font-size: 13px; }

/* browser */
main { flex: 1; min-height: 0; display: flex; }
.browser { width: 160px; display: flex; flex-direction: column; }
.browser-head { flex: none; display: flex; align-items: center; gap: 3px; height: 17px; padding-left: 5px; background: #3e474d; color: #88949a; font-size: 8.5px; letter-spacing: .6px; padding-bottom: 2px; }
.browser-head svg { width: 5px; height: 6px; }
.browser-head .nav { width: 8px; height: 8px; }
.browser-body { flex: 1; min-height: 0; display: flex; overflow: hidden; }
.gutter { width: 9px; background: #2c353a; border-right: 1px solid #232c31; }
#files { flex: 1; margin-top: -8px; background: #192227; }
#files li { display: flex; align-items: center; height: 15.330px; padding-left: 13px; color: #7f95a9; white-space: nowrap; overflow: hidden; letter-spacing: .66px; background: linear-gradient(#2e383e, #2e383e) 8px 0 / 1px 100% no-repeat, linear-gradient(#2e383e, #2e383e) 8px 50% / 4px 1px no-repeat; }
#files svg { width: 10px; height: 10px; margin-right: 3px; color: #6780a0; }
#files li.root { padding-left: 3px; color: #8fa1a8; background: none; }
#files li.root svg { width: 11px; color: inherit; }
#files li.tight { letter-spacing: .25px; }
#files li.mid { letter-spacing: .43px; }
#files li.sel { background: #273035; color: #c7d6e4; }
#files li.sel svg { color: #a6bbd3; }
#files li.red { color: #b58e87; }
#files li.green { color: #86b09a; }

/* playlist */
.playlist { flex: 1; min-width: 0; display: flex; flex-direction: column; border-left: 5px solid #485156; }
.pl-head { flex: none; display: flex; align-items: center; gap: 3px; height: 16px; padding-left: 6px; background: #3f484e; color: #dde6e8; }
.pl-head svg { width: 11px; height: 11px; }
.pl-head .sm { width: 7px; height: 8px; }
.pl-head .mg { margin: 0 8px 0 2px; }
.pl-head .blue { color: #62b5e6; }
.pl-head .green { margin-left: 9px; color: #a8dd45; width: 10px; }
.crumbs { display: flex; align-items: center; gap: 3px; margin-top: -2px; font-size: 8.9px; font-stretch: 100%; font-weight: 500; letter-spacing: -.04px; }
.pl-head .crumbs svg { width: 6px; height: 7px; color: #98a3a8; }
.pl-win { display: flex; gap: 5px; margin: 0 4px 0 auto; }
.pl-win svg { width: 8px; height: 8px; }
.pl-body { flex: 1; min-height: 0; display: flex; }
.picker { width: 108px; display: flex; flex-direction: column; border-right: 4px solid #3b4449; border-left: 1px solid #262f34; }
.tabs { display: flex; align-items: center; justify-content: space-between; height: 27px; padding: 7px 16px 0 9px; color: #7d878c; background: #3c454a; }
.tabs svg { width: 13px; height: 12px; }
.act { color: #f2f6f6; }
.picker-main { flex: 1; display: flex; border-bottom: 1px solid #262f34; }
.patterns { flex: 1; padding: 2px 1px 0 2px; background: #333c43; }
.pat { display: flex; align-items: center; height: 19px; margin-bottom: 1.800px; padding-bottom: 2px; background: #c855d8; border-right: 3px solid #cdf3fa; color: #fff; font-size: 8.800px; letter-spacing: .4px; border-top: 1px solid #da76e6; }
.pat.sel { border: 1px solid #b3b06b; }
.pi { width: 7px; height: 7px; margin: 0 2px 0 1px; overflow: visible; }
.pscroll { width: 10px; background: #373f41; border-left: 1px solid #283136; }
.pscroll b { display: block; height: 9px; background: #596167; }
.add { height: 13px; padding-right: 9px; line-height: 12px; text-align: center; color: #e4eaec; background: #3c454a; font-weight: bold; }
.arrange { flex: 1; min-width: 0; display: flex; flex-direction: column; }
.arr-top { display: flex; height: 26px; background: #3c454a; }
.corner { width: 75px; background: #565f66; border-radius: 16px 0 0 0; color: #7b858a; }
.ci { display: flex; justify-content: flex-end; gap: 6px; padding: 1px 4px 0 0; }
.ci svg { width: 12px; height: 11px; }
.ci .act { color: #f2f6f6; }
.cl { display: flex; justify-content: flex-end; gap: 4px; padding: 4px 4px 0 0; font-size: 5px; letter-spacing: .4px; line-height: 9px; font-stretch: 90%; }
.cl b { color: #e8edee; }
.top-right { flex: 1; display: flex; flex-direction: column; }
.mini { display: flex; height: 13px; background: #333b40; border-bottom: 1px solid #20292d; }
.mbtn { width: 13px; background: #535b61; color: #20282c; text-align: center; line-height: 10px; font-size: 12px; }
.map { width: 892px; height: 12px; }
.ruler { position: relative; flex: 1; background: #1d282d; overflow: hidden; }
.ruler span { position: absolute; top: 1px; line-height: 12px; font-size: 7.5px; color: #909ea3; }
.ruler span.major { font-size: 8.6px; color: #cfdadd; }
.ruler .marker { position: absolute; top: 2px; border: 5px solid transparent; border-top: 7px solid #c4ee52; border-bottom: 0; margin-left: -5px; }
.top-btns { width: 14px; display: flex; flex-direction: column; gap: 1px; }
.top-btns b { height: 13px; line-height: 12px; text-align: center; background: #565e64; color: #1d2529; }
.arr-main { flex: 1; min-height: 0; display: flex; overflow: hidden; }
.heads { width: 74px; background: #1b2a2e; padding-right: 4px; }
.track { position: relative; height: 37.370px; padding: 0 2px; background: linear-gradient(#14bcc1, #12b2b7); border-bottom: 1px solid #0d8f95; color: #e6ffff; font-size: 9px; line-height: 13px; letter-spacing: .5px; box-shadow: inset -1px 0 #0b7f83; white-space: nowrap; }
.track.empty { background: linear-gradient(#4f585d, #495257); border-color: #3e474c; color: #747e82; box-shadow: none; letter-spacing: .75px; }
.track svg { position: absolute; right: 12px; top: 25px; width: 12px; height: 12px; }
.track::before { content: "..."; position: absolute; left: 10px; bottom: 1px; color: #0a7277; letter-spacing: 1px; line-height: 8px; }
.track.empty::before { color: #343c40; }
.track::after { content: ""; position: absolute; right: 2px; top: 28px; width: 8px; height: 8px; border-radius: 50%; background: radial-gradient(circle, #d3f26a 1.800px, #2f6440 2.600px, #5f9c55 4px); }
.track .strip { position: absolute; right: -4px; top: 1px; width: 2px; height: 35px; background: #cdf5f0; }
.lanes {
    position: relative;
    flex: 1;
    overflow: hidden;
    background-color: #2e3f46;
    background-image:
        repeating-linear-gradient(90deg, rgba(10,22,28,.55) 0 1px, transparent 1px 13.435px),
        repeating-linear-gradient(90deg, rgba(10,22,28,.17) 0 1px, transparent 1px 3.359px),
        repeating-linear-gradient(90deg, #2f4047 0 53.740px, #364950 53.740px 107.480px);
}
.lane { position: relative; height: 37.370px; border-bottom: 1px solid #15232a; }
.clip { position: absolute; top: 1px; height: 36px; background: rgba(4,112,115,.85); overflow: hidden; border-right: 1px solid rgba(20,30,50,.5); }
.clip .bar { display: flex; align-items: center; height: 10px; padding-left: 1px; background: linear-gradient(#bd4acb, #ab39b9); color: #fff; font-size: 8px; letter-spacing: .35px; line-height: 10px; white-space: nowrap; border-radius: 1px; }
.clip .bar.wide { letter-spacing: .6px; }
.clip.pattern-clip .bar { background: linear-gradient(#ce62dc, #bd4bcd); }
.clip .bar u { flex: none; width: 7px; height: 5px; margin-right: 1px; }
.clip .bar u svg { width: 7px; height: 5px; }
.clip .shape { width: 100%; height: 26px; }
.clip .split { position: absolute; top: 0; height: 10px; width: 8px; padding: 2.500px 0 0 2px; border-left: 1px solid #6c2478; }
.clip .split svg { width: 6px; height: 5px; }
.clip .split.dim { opacity: .55; }
.playhead { position: absolute; top: 0; bottom: 0; width: 8px; border-right: 1.500px solid #9ade5c; background: linear-gradient(90deg, transparent, rgba(105,160,30,.65)); z-index: 3; }
.vscroll { width: 15px; background: #3b4142; display: flex; flex-direction: column; justify-content: space-between; border-left: 1px solid #2c3436; }
.vscroll b { height: 23px; background: #596066; margin-left: 1px; }
.vscroll span { height: 13px; background: #565e63; text-align: center; line-height: 9px; color: #1c2427; }

/* taskbar */
.taskbar { flex: none; display: flex; height: 27px; background: linear-gradient(90deg, #1d343a, #1f323d 55%, #1b2b48 85%, #1b2a45); }
.start { width: 32px; display: flex; align-items: center; justify-content: center; }
.start svg { width: 12px; height: 12px; }
.search { display: flex; align-items: center; gap: 6px; width: 229px; padding-left: 7px; background: #f2f2f2; color: #444; font-size: 10px; font-stretch: 100%; letter-spacing: -.2px; }
.search svg { width: 14px; height: 14px; }
.apps { display: flex; }
.app { width: 32.900px; display: flex; align-items: center; justify-content: center; }
.app svg { width: 16px; height: 16px; }
.app.run { background: linear-gradient(#76b9ed, #76b9ed) 50% 100% / 27px 2px no-repeat; }
.app.wa { background: #b06a32; border-bottom: 2px solid #ef7a26; }
.app.fl { background: #4b5b64; border-bottom: 2px solid #76b9ed; }
.tray { display: flex; align-items: center; gap: 4px; margin-left: auto; color: #fff; }
.tray svg { width: 12px; height: 12px; }
.clock { width: 50px; text-align: center; font-size: 8.3px; line-height: 12px; padding-top: 1px; color: #fff; letter-spacing: .4px; }
.notif { width: 12px; height: 12px; margin: 7px 16px 0 7px; }
```
FILE: script.js
```js
const BAR = 13.435;
const x = bar => (bar - 1) * BAR;

// browser tree
const folders = ['Crash', 'Cymatics', 'Cymbals', 'Drums', 'Drums (ModeAudio)', 'Emite Beats - Fun..t (Versão Free)', 'FLEX', 'ftlt',
    'FX and Vocals', 'FX Presets', 'HiHat', 'Instruments', 'Kick', 'Legacy', 'Logs', 'Loops', 'Milky Way', 'Noise', 'Open-Hat', 'Percs',
    'PHONK TOP DRUM KIT 2021 4GB', 'Risers', 'Samples uau', 'Scream', 'SFX', 'Shapes', 'Snap', 'Snare & Claps', 'Suicide flp',
    'suicideboys drum kit', 'Super Saiyan Drum Kit', 'The Lunch77 Suicideboys Drumkit', 'Triangle', 'Vocals'];
const roots = [['Project bones', 'folderplus', 'red'], ['Recorded', 'wave', ''], ['Rendered', 'wave', ''], ['Sliced audio', 'wave', ''],
    ['Soundfonts', 'folder', ''], ['Speech', 'folderplus', 'green'], ['Templates', 'folderplus', 'green']];
const icon = id => `<svg><use href="#${id}"/></svg>`;
const fit = f => f.length > 29 ? 'tight' : f.length > 25 ? 'mid' : '';

document.getElementById('files').innerHTML =
    folders.map(f => `<li class="${f === 'HiHat' ? 'sel' : ''} ${fit(f)}">${icon('box')}${f.replace('&', '&amp;')}</li>`).join('') +
    roots.map(r => `<li class="root ${r[2]}">${icon(r[1])}${r[0]}</li>`).join('');

// ruler
let ruler = '';
for (let b = 1; b < 70; b += 2) {
    ruler += `<span class="${b % 4 === 1 ? 'major' : ''}" style="left:${x(b)}px">${b}</span>`;
}
document.getElementById('ruler').innerHTML = ruler + `<div class="marker" style="left:${x(20.1)}px"></div>`;

// tracks: clip = [start, end, label, splits]
const six = [[17, 24.53], [24.95, 33], [33, 40.53], [40.95, 48.5], [49, 57], [57, 65]];
const pick = (label, list) => list.map(i => [...six[i], label]);
const crash = [];
for (let b = 1; b <= 57; b += 4) {
    crash.push([b, b + 2.55, b % 8 === 1 ? (b === 33 ? 'Cras..62' : 'Cra..62') : 'Cra..#2']);
}
const tracks = [
    { name: 'Piano', icon: 'piano', kind: 'piano', strip: 1, clips: [
        [1, 9, 'Sample', [6, 7, 8]], [9, 17, 'Sample', [13, 14, 15, 16]], [17, 24.53, 'Sample', [21, 22, 23, 24]],
        [24.95, 33, 'Sample', [29, 30, 31, 32]], [33, 40.53, 'Sample', [37, 38, 39, 40]], [40.95, 48.5, 'Sample', [45, 46, 47, 48]],
        [49, 57, 'Sample', [53, 54, 55, 56]], [57, 65, 'Sample', [61, 62, 63, 64]]] },
    { name: 'Strings', icon: 'guitar', kind: 'strings', strip: 1, clips: [[9, 16.95, 'Sample', [15.55, 16.1]], ...pick('Sample', [0, 1, 2, 3, 4, 5])] },
    { name: 'Vocal', icon: 'wave', kind: 'vocal', strip: 1, clips: pick('Sample', [0, 1, 2, 3, 4, 5]) },
    { name: 'Vocal 2', icon: 'wave', kind: 'vocal2', strip: 1, clips: [[17, 24.53, 'Sample', [23.5, 24]], [33, 40.53, 'Sample', [39.5, 40]],
        [40.95, 48.5, 'Sample', [47.5, 48]], [57, 65, 'Sample', [63.5, 64, 64.5]]] },
    { name: '808', icon: 'bass', kind: 'n808', strip: 1, clips: pick('808', [0, 1, 3, 4, 5]) },
    { name: 'HiHat', icon: 'stand', kind: 'nhat', strip: 1, clips: [[1, 17, 'HiHat'], ...pick('HiHat', [0, 1, 2, 3, 4, 5])] },
    { name: 'Kick', icon: 'kick', kind: 'nkick', strip: 1, clips: [[17, 24.53, 'Kick'], [24.95, 32, 'Kick'], ...pick('Kick', [3, 4, 5])] },
    { name: 'Snare', icon: 'drum', kind: 'nsnare', clips: pick('Snare', [0, 1, 2, 3, 4, 5]) },
    { name: 'Chucky Laugh', icon: 'vox', kind: 'laugh', clips: [1, 17, 33, 49].map(b => [b, b + 2.05, 'Ch..h']) },
    { name: 'Cymbal', icon: 'stand', kind: 'crash', clips: crash },
    { name: 'Volume', icon: 'auto', kind: 'volume', strip: 1, clips: [[1, 65.15, 'Master - Volume']] }
];
for (let n = 12; n <= 16; n++) tracks.push({ name: 'Track ' + n, clips: [] });

let seed = 7;
function rnd() {
    seed = (seed * 16807) % 2147483647;
    return seed / 2147483647;
}

// half height of the waveform at px
function amp(kind, px, label) {
    const p = px / BAR;
    if (kind === 'piano') return 3.7 + rnd() * 1 + (rnd() > .88 ? 1.2 : 0);
    if (kind === 'strings') return 1.1 + rnd() * .5;
    if (kind === 'vocal') {
        if (p < 1.6) return .8 + 3.2 * Math.sin(p / 1.6 * 2.4) + rnd() * 1.2;
        if (p < 3.8) return 2.6 + (p - 1.6) * 1.1 + rnd() * 1.6;
        const q = ((p - 3.8) / 1.04) % 1;
        return .8 + 3.9 * Math.pow(Math.sin(q * Math.PI), 1.3) + rnd() * .6;
    }
    if (kind === 'vocal2') return 1.2 + 2.4 * Math.pow(Math.sin(px / 6.72 * Math.PI), 4) * (px % 20 < 9 ? 1 : .65) + rnd() * .8;
    if (kind === 'laugh') return (px < 8 ? 9.5 : 7.5) - (Math.round(px / .8) % 5 === 0 ? 3 : 0) - rnd();
    if (label.includes('#')) return .5 + 6.5 * Math.exp(-px / 5);
    return .5 + 12.5 * Math.exp(-px / 4.4);
}

function shape(kind, w, label) {
    let d = '';
    if (kind === 'volume') {
        return `<svg class="shape" viewBox="0 0 ${w} 26" preserveAspectRatio="none"><path d="M0 5.500H${w - 53}Q${w - 30} 22 ${w} 25.500V26H0z" fill="rgba(85,130,155,.5)"/>
            <path d="M0 5.500H${w - 53}Q${w - 30} 22 ${w} 25.500" fill="none" stroke="#b4c4e0" stroke-width="1.200"/></svg>`;
    }
    if (kind[0] === 'n') {
        for (let t = 0; t < w; t += 3.36) {
            const k = Math.round(t / 3.36);
            if (kind === 'nhat') d += `M${t} 24.500h${[7, 14, 15].includes(k % 32) ? 3.4 : 1.8}`;
            if (kind === 'n808' && [0, 4, 7, 13].includes(k % 32)) d += `M${t + 1} 22v3`;
            if (kind === 'n808' && [16, 19, 24, 26, 30].includes(k % 32)) d += `M${t + 1} 1v4`;
            if (kind === 'nkick' && [0, 4, 7].includes(k % 8)) d += `M${t + 1} 23v2`;
            if (kind === 'nsnare' && k % 4 === 2) d += `M${t} 23v2`;
        }
        return `<svg class="shape" viewBox="0 0 ${w} 26" preserveAspectRatio="none"><path d="${d}" fill="none" stroke="#6fa3ab" stroke-width="${kind === 'nhat' ? 1.6 : .8}"/></svg>`;
    }
    const up = [], down = [];
    for (let px = 0; px <= w; px += .8) {
        const a = amp(kind, px, label);
        up.push(`${px.toFixed(1)} ${(13 - a).toFixed(2)}`);
        down.unshift(`${px.toFixed(1)} ${(13 + a).toFixed(2)}`);
    }
    return `<svg class="shape" viewBox="0 0 ${w} 26" preserveAspectRatio="none"><path d="M${up.join('L')}L${down.join('L')}z" fill="#fb9bfb"/></svg>`;
}

const mark = '<svg viewBox="0 0 7 5"><path d="M.5 0v5M1 2.500h5M3.500 .8v3.400M4.500 1.200v2.600" stroke="#fff" fill="none"/></svg>';
const patMark = '<svg class="pi" viewBox="0 0 7 7"><path d="M0 .5h6.500v6H0M1 3.500h3M4.500 1v5" stroke="#fff" fill="none"/></svg>';
let heads = '', lanes = '';
tracks.forEach(t => {
    heads += `<div class="track ${t.kind ? '' : 'empty'}">${t.name}${t.icon ? icon(t.icon) : ''}${t.strip ? '<div class="strip"></div>' : ''}</div>`;
    lanes += '<div class="lane">';
    t.clips.forEach(([from, to, label, splits = []]) => {
        const isPattern = t.kind[0] === 'n';
        const w = x(to) - x(from);
        const glyph = isPattern ? patMark : `<u>${t.kind === 'volume' ? icon('auto') : mark}</u>`;
        lanes += `<div class="clip ${isPattern ? 'pattern-clip' : ''}" style="left:${x(from)}px;width:${w}px">
            <div class="bar ${label === 'Sample' || t.kind === 'volume' ? 'wide' : ''}">${glyph}${label}</div>${shape(t.kind, w, label)}
            ${splits.map(s => `<div class="split ${s % 1 || to - s < .6 ? 'dim' : ''}" style="left:${x(s) - x(from)}px">${mark}</div>`).join('')}</div>`;
    });
    lanes += '</div>';
});
document.getElementById('heads').innerHTML = heads;
document.getElementById('lanes').innerHTML = lanes + `<div class="playhead" style="left:${x(20.15) - 7}px"></div>`;
```
